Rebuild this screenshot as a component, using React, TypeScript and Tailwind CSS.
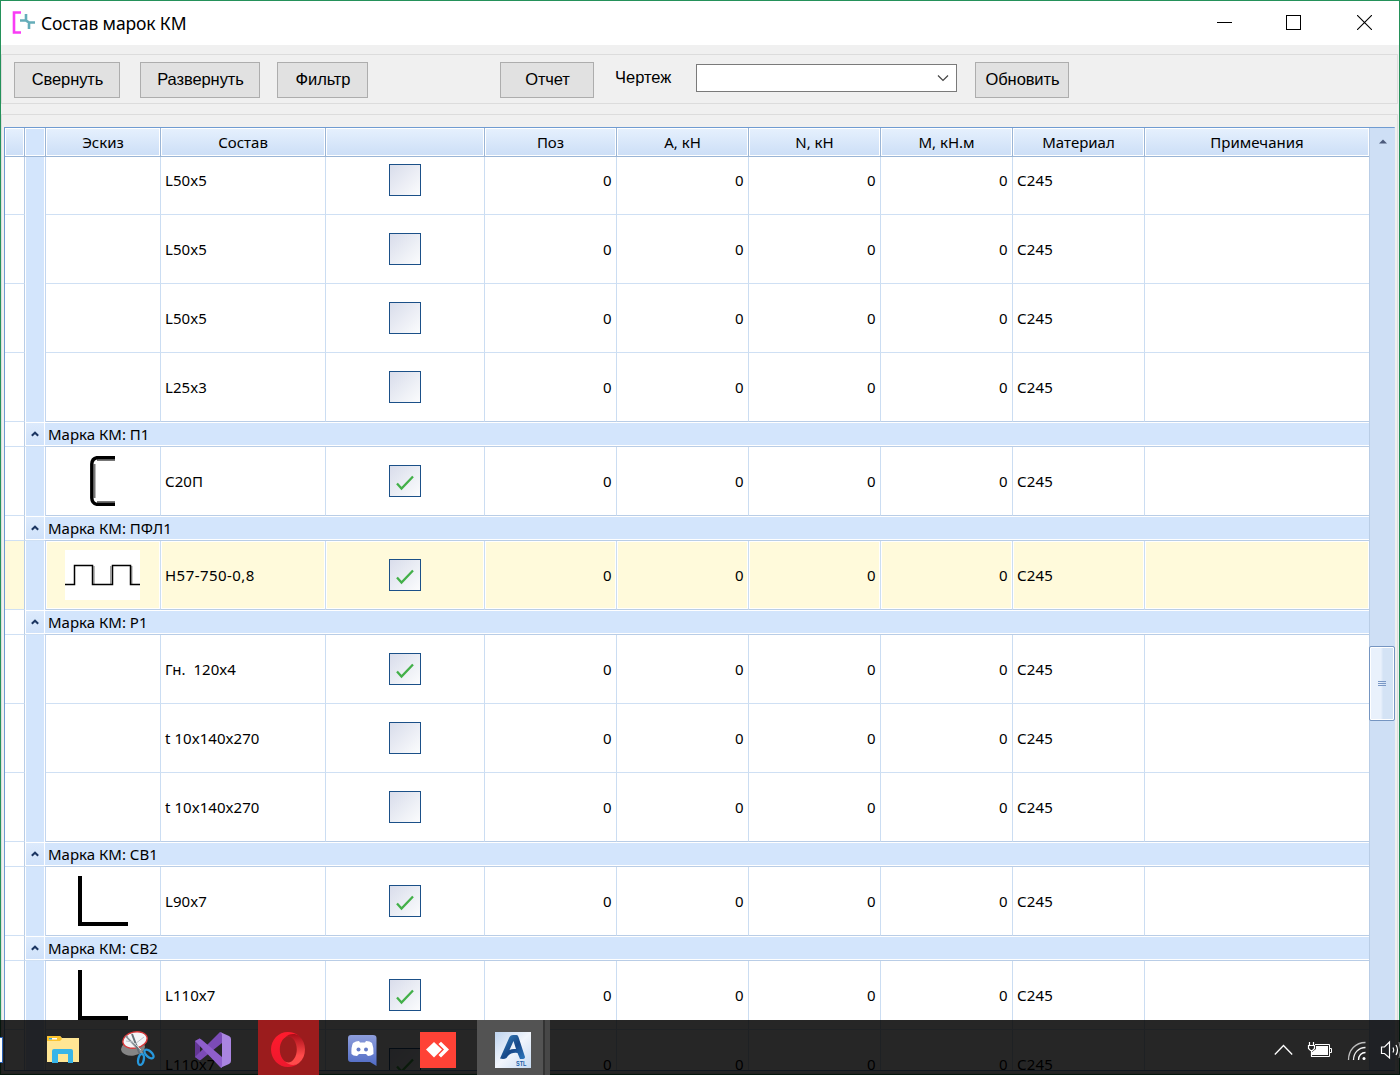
import React from "react";

type Sketch = "channel" | "deck" | "angle";
type Item = { name: string; checked?: boolean; sketch?: Sketch; selected?: boolean; last?: boolean };
type Group = { title?: string; items: Item[] };

const groups: Group[] = [
  { items: [{ name: "L50x5" }, { name: "L50x5" }, { name: "L50x5" }, { name: "L25x3", last: true }] },
  { title: "Марка КМ: П1", items: [{ name: "С20П", checked: true, sketch: "channel", last: true }] },
  { title: "Марка КМ: ПФЛ1", items: [{ name: "Н57-750-0,8", checked: true, sketch: "deck", selected: true, last: true }] },
  {
    title: "Марка КМ: Р1",
    items: [{ name: "Гн.  120x4", checked: true }, { name: "t 10x140x270" }, { name: "t 10x140x270", last: true }],
  },
  { title: "Марка КМ: СВ1", items: [{ name: "L90x7", checked: true, sketch: "angle", last: true }] },
  { title: "Марка КМ: СВ2", items: [{ name: "L110x7", checked: true, sketch: "angle" }, { name: "L110x7", checked: true }] },
];

const GRID = "grid grid-cols-[20px_21px_115px_165px_159px_132px_132px_132px_132px_132px_224px]";

function SketchView({ kind }: { kind: Sketch }) {
  if (kind === "channel")
    return (
      <svg width="25" height="50" viewBox="0 0 25 50" fill="none" className="mr-px">
        <path d="M4.500 8V42M7 4H25M7 46H25" stroke="#777" strokeWidth="2" />
        <path d="M25 1.500H8Q2 2 1.800 8V42Q2 48 8 48.500H25" stroke="#000" strokeWidth="3.400" />
      </svg>
    );
  if (kind === "deck")
    return (
      <svg width="75" height="50" viewBox="0 0 75 50" fill="none" className="mr-px bg-white">
        <path d="M29 16V34M45.800 16V34M66.800 16V34" stroke="#8a8a8a" strokeWidth="1.200" />
        <path d="M0 34.500H9.500V15.500H27.500V34.500H47.500V15.500H65.500V34.500H75" stroke="#000" strokeWidth="1.500" />
      </svg>
    );
  return (
    <svg width="50" height="50" viewBox="0 0 50 50" fill="none">
      <path d="M2 0V48H50" stroke="#000" strokeWidth="4" />
    </svg>
  );
}

function CheckBox({ checked }: { checked?: boolean }) {
  return (
    <div className="flex size-8 items-center justify-center border border-[#1b5088] bg-linear-to-br from-[#d9ddeb] to-[#fbfcfd]">
      {checked && (
        <svg width="18" height="16" viewBox="0 0 18 16" fill="none" className="mt-1">
          <path d="M1 8.500L5.500 13.500L17 1.500" stroke="#43b049" strokeWidth="2.300" />
        </svg>
      )}
    </div>
  );
}

function Row({ item }: { item: Item }) {
  const edge = item.last ? "border-b-[#b9cde6]" : "border-b-[#cfe0f4]";
  const fill = item.selected ? "bg-[#fffadb] shadow-[inset_0_0_0_1px_#fff]" : "bg-white";
  const cell = `flex items-center border-b border-r border-r-[#cbddf2] ${edge} ${fill}`;
  return (
    <div className={`${GRID} h-[69px] shrink-0`}>
      <div className={`border-b border-r border-b-[#cfe0f4] border-r-[#b9cde6] ${item.selected ? "bg-[#fffadb]" : "bg-white"}`} />
      <div className="border-r border-[#c3d6ef] bg-white px-px">
        <div className="h-full bg-[#d3e5fc]" />
      </div>
      <div className={`${cell} justify-center`}>{item.sketch && <SketchView kind={item.sketch} />}</div>
      <div className={`${cell} whitespace-pre pl-1 ${item.selected ? "tracking-[0.45px]" : "tracking-[0.05px]"}`}>{item.name}</div>
      <div className={`${cell} justify-center`}>
        <CheckBox checked={item.checked} />
      </div>
      {[0, 1, 2, 3].map((n) => (
        <div key={n} className={`${cell} justify-end pr-[4.5px]`}>
          0
        </div>
      ))}
      <div className={`${cell} pl-1 tracking-[0.2px]`}>С245</div>
      <div className={`border-b ${edge} ${fill}`} />
    </div>
  );
}

function GroupRow({ title }: { title: string }) {
  return (
    <div className="flex h-[25px] shrink-0 bg-white">
      <div className="w-5 border-b border-r border-b-[#cfe0f4] border-r-[#b9cde6]" />
      <div className="flex w-5 border-b border-[#cfe0f4] p-px">
        <div className="flex flex-1 items-center justify-center bg-linear-to-b from-[#dceafc] to-[#d0e2fa] pr-px">
          <svg width="8" height="6" viewBox="0 0 8 6" fill="none">
            <path d="M0.800 4.800L4 1.700L7.200 4.800" stroke="#1c3662" strokeWidth="2" />
          </svg>
        </div>
      </div>
      <div className="flex flex-1 border-b border-[#b9cde6] py-px">
        <div className="flex flex-1 items-center bg-[#d3e5fc] pl-[3px]">{title}</div>
      </div>
    </div>
  );
}

const headers = ["", "", "Эскиз", "Состав", "", "Поз", "А, кН", "N, кН", "М, кН.м", "Материал", "Примечания"];

function Btn({ children, className }: { children: string; className: string }) {
  return (
    <button
      className={`flex h-9 shrink-0 items-center justify-center whitespace-nowrap border border-[#adadad] bg-[#e1e1e1] pb-0.5 pl-px font-['Liberation_Sans',sans-serif] text-[16.5px] tracking-[-0.1px] ${className}`}
    >
      {children}
    </button>
  );
}

function Folder() {
  return (
    <svg width="32" height="28" viewBox="0 0 32 28">
      <path d="M0 1Q0 0 1 0H13L15 2H32V26H0Z" fill="#ffe694" />
      <path d="M0 1Q0 0 1 0H13L15 3L13 5H0Z" fill="#fbc32d" />
      <path d="M2 2H10V3.500H2Z" fill="#fff" />
      <path d="M2 2H5V3.500H2Z" fill="#39a6dc" />
      <path d="M5 27V15Q5 13 7 13H24Q26 13 26 15V27H21V18H11V27Z" fill="#38b5e8" />
    </svg>
  );
}

function Scissors() {
  return (
    <svg width="34" height="36" viewBox="0 0 34 36" fill="none">
      <ellipse cx="12" cy="17" rx="12" ry="7.500" fill="#858585" transform="rotate(-8 12 17)" />
      <ellipse cx="14" cy="9" rx="12.300" ry="8" fill="#f4f5f8" stroke="#d8393b" strokeWidth="1.400" transform="rotate(-12 14 9)" />
      <path d="M5 5L22 23" stroke="#8b949a" strokeWidth="2" />
      <path d="M11 3L19 24" stroke="#667078" strokeWidth="2" />
      <path d="M7 6L20 19" stroke="#e5e8e9" strokeWidth="0.800" />
      <path d="M23 6L14 13M5 10L12 11" stroke="#bfc2c8" />
      <ellipse cx="20" cy="28.500" rx="2.800" ry="5.500" stroke="#2798dc" strokeWidth="2.400" transform="rotate(12 20 28.500)" />
      <ellipse cx="28" cy="23" rx="2.800" ry="5.500" stroke="#2798dc" strokeWidth="2.400" transform="rotate(-48 28 23)" />
    </svg>
  );
}

function VisualStudio() {
  return (
    <svg width="36" height="36" viewBox="0 0 36 36">
      <path d="M0 9L5 6V28L0 25Z" fill="#6a38a1" />
      <path d="M0 25L4 28Q5 29 7 27L27 11V1L25 0Z" fill="#8550c7" />
      <path d="M0 9L4 7Q5 6 7 8L27 25V36L25 35Z" fill="#9b66de" />
      <path d="M25 0L34 4Q36 5 36 7V29Q36 31 34 32L25 36Q27 35 27 33V3Q27 1 25 0Z" fill="#b990f5" />
    </svg>
  );
}

function Opera() {
  return (
    <svg width="34" height="35" viewBox="0 0 34 35" className="mr-px">
      <defs>
        <linearGradient id="operaLeft" x1="0" y1="0" x2="0" y2="1">
          <stop offset="0" stopColor="#ff1b2d" />
          <stop offset="1" stopColor="#ee182d" />
        </linearGradient>
        <linearGradient id="operaRight" x1="0" y1="0" x2="0" y2="1">
          <stop offset="0" stopColor="#a90d18" />
          <stop offset="0.700" stopColor="#ff4b4b" />
          <stop offset="1" stopColor="#ff4b4b" />
        </linearGradient>
      </defs>
      <path d="M17 0C7.600 0 0 7.800 0 17.500S7.600 35 17 35C21 35 25 33.500 28 31C25 32.500 22 32.500 19 31.200C13 31 8.800 25 8.800 17.500S13 4 19 3.800C22 2.500 25 2.500 28 4C25 1.500 21 0 17 0Z" fill="url(#operaLeft)" />
      <path d="M14 5.500C18 1.500 24 1 28 4C32 7.500 34 12.300 34 17.500S32 27.500 28 31C24 34 18 33.500 14 29.500C20 33 25.800 26 25.800 17.500S20 2 14 5.500Z" fill="url(#operaRight)" />
    </svg>
  );
}

function Discord() {
  return (
    <svg width="29" height="31" viewBox="0 0 29 31">
      <defs>
        <linearGradient id="discordBg" x1="0" y1="0" x2="0" y2="1">
          <stop offset="0" stopColor="#8e9edb" />
          <stop offset="1" stopColor="#506bc5" />
        </linearGradient>
      </defs>
      <path d="M3 0H25Q28.500 0 28.500 3V31L22 27H3Q0 27 0 24V3Q0 0 3 0Z" fill="url(#discordBg)" />
      <path d="M5 8Q8 6 11 6L12 7.500H17L18 6Q22 6 24 8Q26 13 25.500 19Q23 21 20 21L18 19H11L9 21Q5 21 3.500 19Q3 12 5 8Z" fill="#fff" />
      <circle cx="10.500" cy="14.500" r="2" fill="#657cc8" />
      <circle cx="18" cy="14.500" r="2" fill="#657cc8" />
    </svg>
  );
}

function Taskbar() {
  return (
    <div className="absolute inset-x-0 bottom-0 flex h-[55px] items-center bg-black/85">
      <div className="mt-1 h-[26px] w-[3px] shrink-0 border-y border-r border-[#2b62b5] bg-white" />
      <div className="ml-11 pt-1"><Folder /></div>
      <div className="ml-[42px] pt-0.5"><Scissors /></div>
      <div className="ml-10 pt-1 opacity-90"><VisualStudio /></div>
      <div className="ml-[27px] flex h-full w-[61px] items-center justify-center bg-[#9b1c1d] pt-1"><Opera /></div>
      <div className="ml-[29px] pt-1.5"><Discord /></div>
      <div className="ml-[43px] mt-1 flex size-9 items-center justify-center bg-[#ff4236]">
        <svg width="24" height="18" viewBox="0 0 24 18">
          <path d="M0 8.500L8 1L16 8.500L8 16.500Z" fill="#fff" />
          <path d="M12.500 3L15 .8L23 8.500L15 16.500L12.500 14L18 8.500Z" fill="#fff" />
        </svg>
      </div>
      <div className="ml-[21px] flex h-full w-[66px] items-center bg-[#535353] pl-[18px] pt-1">
        <svg width="36" height="36" viewBox="0 0 36 36">
          <defs>
            <linearGradient id="cadBg" x1="0" y1="0" x2="1" y2="1">
              <stop offset="0" stopColor="#bdd3ef" />
              <stop offset="0.500" stopColor="#f1f5fc" />
              <stop offset="1" stopColor="#c7dbf3" />
            </linearGradient>
            <linearGradient id="cadMark" x1="0" y1="0" x2="1" y2="1">
              <stop offset="0" stopColor="#3884bd" />
              <stop offset="0.550" stopColor="#174889" />
              <stop offset="1" stopColor="#2d78be" />
            </linearGradient>
          </defs>
          <path d="M0 0H36V36H0Z" fill="url(#cadBg)" />
          <path fillRule="evenodd" d="M5 26.500L14.500 5Q15.500 3 18 3H21.500Q23 3 23.500 5L30 25Q30 27 27 27H25L22.500 21Q15 20 11.500 26Q9 27.500 5 26.500ZM14.500 18Q17 16.500 21 17L18.500 9Z" fill="url(#cadMark)" />
          <text x="21" y="33.500" fontFamily="Liberation Sans, sans-serif" fontSize="6.500" fontWeight="bold" textLength="10.500" lengthAdjust="spacingAndGlyphs" fill="#1d5fa8">STL</text>
        </svg>
      </div>
      <div className="h-full w-0.5 bg-[#333]" />
      <div className="h-full w-[5px] bg-[#474747]" />
      <div className="ml-auto flex h-full items-center text-white">
        <svg width="19" height="12" viewBox="0 0 19 12" fill="none" className="mr-[14px] mt-1">
          <path d="M.8 10.500L9.500 1.500L18.200 10.500" stroke="currentColor" strokeWidth="1.300" />
        </svg>
        <svg width="25" height="18" viewBox="0 0 25 18" fill="none" className="mr-[15px] mt-1">
          <path d="M8 3.500H22.500V15.500H4M23 7.500H24.500V11.500H23" stroke="currentColor" />
          <path d="M9 5H21V14H5V11L9 8Z" fill="currentColor" />
          <path d="M1.500 4.500H7.500V7.500L5.500 9.500H3.500L1.500 7.500ZM2.500 1V4M6.500 1V4M4.500 10V15.500" stroke="currentColor" strokeWidth="1.200" />
        </svg>
        <svg width="20" height="20" viewBox="0 0 20 20" fill="none" className="mr-[13px] mt-1.5">
          <g stroke="#bdbdbd" strokeWidth="1.300">
            <path d="M1.500 19C1.500 9 8.500 1.500 18.500 1.500" />
            <path d="M6.500 19C6.500 12 11.500 6.500 18.500 6.500" stroke="#eee" />
            <path d="M11.500 19C11.500 14.500 14.500 11.500 18.500 11.500" stroke="#fff" />
          </g>
          <circle cx="17" cy="17.500" r="1.500" fill="#fff" />
        </svg>
        <svg width="20" height="20" viewBox="0 0 20 20" fill="none" className="mt-1">
          <path d="M1.500 7H4.500L9.500 2V18L4.500 13.500H1.500Z" stroke="currentColor" strokeWidth="1.200" />
          <path d="M13 7.500Q14.500 10 13 12.500M16 5Q19 10 16 15" stroke="currentColor" strokeWidth="1.200" />
          <path d="M19 2Q22 10 19 18" stroke="#888" />
        </svg>
      </div>
    </div>
  );
}

export default function App() {
  return (
    <div className="relative h-[1075px] w-[1400px] overflow-hidden font-['Noto_Sans',sans-serif] text-black">
      <div className="flex h-full flex-col border border-[#24915a] bg-[#f0f0f0]">
        <div className="flex h-11 shrink-0 items-center bg-white pl-[11px]">
          <svg width="24" height="23" viewBox="0 0 24 23" fill="none" className="mb-0.5">
            <path d="M9 1.500H2V21.500H9" stroke="#f93cf5" strokeWidth="2.600" />
            <path d="M8 9.500H14V3M23 11.500H17V18M14 8V9.500L17 11.500V13" stroke="#65adb9" strokeWidth="2.600" />
          </svg>
          <span className="ml-[5px] text-[17.5px] leading-6 tracking-[-0.13px]">Состав марок КМ</span>
          <div className="ml-auto flex items-center pb-0.5 pr-[27px]">
            <div className="mr-[54px] h-px w-[15px] bg-black" />
            <div className="mr-14 size-[15px] border border-black" />
            <svg width="15" height="15" viewBox="0 0 15 15">
              <path d="M0 0L15 15M15 0L0 15" stroke="#000" strokeWidth="1.100" />
            </svg>
          </div>
        </div>

        <div className="mr-px mt-[9px] flex h-[50px] shrink-0 items-start border border-[#dcdcdc] pl-3 pt-[7px]">
          <Btn className="mr-5 w-[106px]">Свернуть</Btn>
          <Btn className="mr-[17px] w-[120px]">Развернуть</Btn>
          <Btn className="mr-[132px] w-[91px]">Фильтр</Btn>
          <Btn className="mr-[21px] w-[94px]">Отчет</Btn>
          <span className="mt-[3px] w-[81px] font-['Liberation_Sans',sans-serif] text-[16.5px] leading-6">Чертеж</span>
          <div className="mr-[18px] mt-0.5 flex h-7 w-[261px] items-center justify-end border border-[#7a7a7a] bg-white pr-[7px]">
            <svg width="12" height="8" viewBox="0 0 12 8" fill="none">
              <path d="M1 1.500L6 6.500L11 1.500" stroke="#444" strokeWidth="1.200" />
            </svg>
          </div>
          <Btn className="w-[94px]">Обновить</Btn>
        </div>

        <div className="mr-px mt-[10px] flex flex-1 flex-col border border-[#dcdcdc] pl-0.5 pr-0.5 pt-3">
          <div className="flex h-[944px] border border-[#6f9bd1] border-r-[#b3cae8] text-[15px]">
            <div className="flex w-[1364px] flex-col">
              <div className={`${GRID} h-[29px] shrink-0 border-b border-[#9ab5d6] bg-white leading-5`}>
                {headers.map((h, i) => (
                  <div key={i} className={`p-px ${i < 10 ? "border-r border-[#9ab5d6]" : ""}`}>
                    <div className={`flex h-full items-center justify-center ${i === 1 ? "bg-[#d3e5fc]" : "bg-linear-to-b from-[#e5f0fd] to-[#cddff7]"}`}>{h}</div>
                  </div>
                ))}
              </div>
              <div className="flex h-[913px] flex-col overflow-hidden">
                <div className="-mt-[11px] flex flex-col">
                  {groups.map((g, i) => (
                    <React.Fragment key={i}>
                      {g.title && <GroupRow title={g.title} />}
                      {g.items.map((item, j) => (
                        <Row key={j} item={item} />
                      ))}
                    </React.Fragment>
                  ))}
                </div>
              </div>
            </div>
            <div className="flex flex-1 flex-col border-l border-[#b9cde6] bg-[#cedff5]">
              <div className="flex h-[518px] justify-center pt-[11px]">
                <svg width="8" height="5" viewBox="0 0 8 5">
                  <path d="M0 4.500L4 .5L8 4.500Z" fill="#4b5a7b" />
                </svg>
              </div>
              <div className="-ml-px flex h-[75px] w-[26px] flex-col items-center justify-center gap-px rounded-[2px] border border-[#7595c1] bg-linear-to-r from-[#e9f1fc] from-45% to-[#d4e3f5] to-55% shadow-[inset_0_0_0_1px_#fff]">
                <div className="h-px w-2 bg-[#7a98c5]" />
                <div className="h-px w-2 bg-[#7a98c5]" />
                <div className="h-px w-2 bg-[#7a98c5]" />
              </div>
            </div>
          </div>
        </div>
      </div>
      <Taskbar />
    </div>
  );
}
